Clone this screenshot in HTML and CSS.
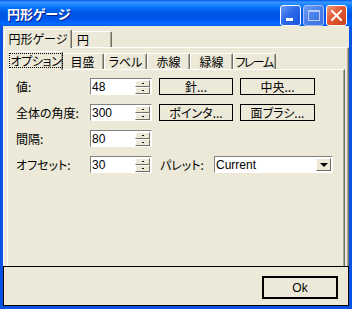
FILE: index.html
```html
<!DOCTYPE html>
<html lang="ja">
<head>
    <meta charset="UTF-8">
    <meta name="viewport" content="width=device-width, initial-scale=1.0">
    <title>円形ゲージ</title>
    <link rel="stylesheet" href="styles.css">
</head>
<body>
    <div class="window">
        <div class="titlebar">
            <span class="title">円形ゲージ</span>
            <div class="title-buttons">
                <div class="tbtn min"><span class="min-bar"></span></div>
                <div class="tbtn max"><span class="max-box"></span></div>
                <div class="tbtn close">
                    <svg width="11" height="11" viewBox="0 0 11 11">
                        <path d="M1 1 L10 10 M10 1 L1 10" stroke="#fff" stroke-width="2" stroke-linecap="square"/>
                    </svg>
                </div>
            </div>
        </div>

        <div class="frame">
            <div class="tabs outer-tabs">
                <div class="tab active outer-first">円形ゲージ</div>
                <div class="tab outer-second">円</div>
            </div>

            <div class="panel outer-panel">
                <div class="tabs inner-tabs">
                    <div class="tab active inner-first"><span class="focus">オプション</span></div>
                    <div class="tab">目盛</div>
                    <div class="tab">ラベル</div>
                    <div class="tab">赤線</div>
                    <div class="tab">緑線</div>
                    <div class="tab narrow-text">フレーム</div>
                </div>

                <div class="panel inner-panel">
                    <div class="options">
                        <span class="field-label">値:</span>
                        <div class="spin"><span class="spin-value">48</span><span class="spin-btns"><i></i><i></i></span></div>
                        <button class="btn">針...</button>
                        <button class="btn">中央...</button>

                        <span class="field-label">全体の角度:</span>
                        <div class="spin"><span class="spin-value">300</span><span class="spin-btns"><i></i><i></i></span></div>
                        <button class="btn">ポインタ...</button>
                        <button class="btn">面ブラシ...</button>

                        <span class="field-label">間隔:</span>
                        <div class="spin"><span class="spin-value">80</span><span class="spin-btns"><i></i><i></i></span></div>
                        <span></span>
                        <span></span>

                        <span class="field-label">オフセット:</span>
                        <div class="spin"><span class="spin-value">30</span><span class="spin-btns"><i></i><i></i></span></div>
                        <div class="palette">
                            <span class="palette-label">パレット:</span>
                            <div class="combo">
                                <span class="combo-value">Current</span>
                                <span class="combo-btn"><i></i></span>
                            </div>
                        </div>
                    </div>
                </div>
            </div>

            <div class="footer">
                <button class="ok-btn">Ok</button>
            </div>
        </div>
    </div>
</body>
</html>
```

FILE: styles.css
```css
/* Base */
* {
    box-sizing: border-box;
}

body {
    margin: 0;
    background: #ece9d8;
    font-family: "Noto Sans CJK JP", sans-serif;
    font-size: 12px;
    font-feature-settings: "palt";
    color: #000;
}

.window {
    width: 352px;
    height: 309px;
    display: flex;
    flex-direction: column;
}

/* Title bar */
.titlebar {
    height: 26px;
    flex: none;
    display: flex;
    align-items: flex-start;
    padding: 0 5px 0 7px;
    background: linear-gradient(to bottom, #0058ee 0%, #3a93ff 8%, #288eff 14%, #127dff 22%, #036ffc 30%, #0262ee 40%, #0057e5 50%, #0054e3 60%, #0055eb 70%, #005bf5 80%, #026afe 90%, #0062ef 100%);
}

.title {
    margin-top: 5px;
    line-height: 17px;
    color: #fff;
    font-size: 13px;
    font-weight: bold;
    text-shadow: 1px 1px #0a1e8c;
}

.title-buttons {
    margin-left: auto;
    margin-top: 5px;
    display: flex;
    gap: 2px;
}

.tbtn {
    width: 21px;
    height: 21px;
    border: 1px solid #fff;
    border-radius: 3px;
    display: flex;
    align-items: center;
    justify-content: center;
    position: relative;
    background: linear-gradient(135deg, #6a9cf8 0%, #2c6ae8 45%, #1a55de 100%);
}

.min-bar {
    position: absolute;
    left: 5px;
    bottom: 4px;
    width: 7px;
    height: 3px;
    background: #fff;
}

.tbtn.max {
    border-color: #a8c0f4;
    background: linear-gradient(135deg, #6f9ef4 0%, #4a80ea 50%, #3b70e2 100%);
}

.max-box {
    width: 12px;
    height: 11px;
    border: 1px solid #b6cbf6;
    border-top-width: 2px;
}

.tbtn.close {
    background: linear-gradient(135deg, #f0997a 0%, #e25a30 45%, #c8411a 100%);
}

/* Frame */
.frame {
    flex: 1;
    display: flex;
    flex-direction: column;
    border: 3px solid #0a52e4;
    border-top: none;
    background: #ece9d8;
}

/* Tabs */
.tabs {
    display: flex;
    align-items: flex-end;
    height: 18px;
    flex: none;
    position: relative;
    z-index: 1;
}

.outer-tabs {
    margin-top: 3px;
    padding-left: 3px;
}

.inner-tabs {
    margin-top: 3px;
    padding-left: 7px;
}

.tab {
    width: 43px;
    height: 16px;
    border: 1px solid;
    border-color: #fff #716f64 transparent #fff;
    border-bottom: none;
    border-radius: 2px 2px 0 0;
    box-shadow: inset -1px 0 #aca899;
    background: #ece9d8;
    display: flex;
    align-items: center;
    justify-content: center;
    white-space: nowrap;
    line-height: 1;
}

.tab.active {
    height: 19px;
    margin: 0 -2px -1px;
    position: relative;
    z-index: 1;
}

.narrow-text {
    letter-spacing: -1.5px;
    padding-right: 1px;
}

.outer-first {
    width: 68px;
}

.outer-second {
    width: 42px;
    justify-content: flex-start;
    padding-left: 6px;
}

.inner-first {
    width: 54px;
    padding: 1px 1px 2px 1px;
}

.focus {
    flex: 1;
    align-self: stretch;
    display: flex;
    align-items: center;
    justify-content: center;
    border: 1px dotted #000;
    letter-spacing: -0.3px;
}

/* Panels */
.panel {
    flex: 1;
    display: flex;
    flex-direction: column;
    border: 1px solid;
    border-color: #fff #716f64 transparent #fff;
    border-bottom: none;
    box-shadow: inset -1px 0 #aca899;
}

.inner-panel {
    margin: 0 3px;
}

/* Option form */
.options {
    display: grid;
    grid-template-columns: 67px 62px 74px 75px;
    grid-template-rows: repeat(4, 17px);
    column-gap: 7px;
    row-gap: 9px;
    padding: 8px 0 0 8px;
    align-items: center;
}

.field-label {
    white-space: nowrap;
    line-height: 1;
}

.spin,
.combo {
    height: 17px;
    display: flex;
    align-items: center;
    background: #fff;
    border: 1px solid;
    border-color: #808080 #fff #fff #808080;
    font-family: "Liberation Sans", sans-serif;
    font-size: 12px;
}

.spin-value,
.combo-value {
    padding-left: 1px;
}

.spin-btns {
    margin-left: auto;
    margin-right: 1px;
    width: 15px;
    height: 14px;
    display: flex;
    flex-direction: column;
}

.spin-btns i {
    flex: 1;
    background: #ece9d8;
    border: 1px solid;
    border-color: #fff #716f64 #716f64 #fff;
    display: flex;
    align-items: center;
    justify-content: center;
}

.spin-btns i::after {
    content: "";
    width: 2px;
    height: 1px;
    background: #000;
}

.btn {
    height: 17px;
    padding: 0;
    border: 1px solid #000;
    background: #ece9d8;
    font: inherit;
    line-height: 1;
    color: #000;
}

.palette {
    grid-column: 3 / span 2;
    width: 174px;
    display: flex;
    align-items: center;
}

.palette-label {
    width: 55px;
    padding-left: 1px;
    line-height: 1;
}

.combo {
    flex: 1;
}

.combo-btn {
    margin-left: auto;
    margin-right: 1px;
    width: 15px;
    height: 13px;
    background: #ece9d8;
    border: 1px solid;
    border-color: #fff #716f64 #716f64 #fff;
    display: flex;
    align-items: center;
    justify-content: center;
}

.combo-btn i {
    width: 0;
    height: 0;
    border-left: 4px solid transparent;
    border-right: 4px solid transparent;
    border-top: 4px solid #000;
}

/* Footer */
.footer {
    height: 40px;
    flex: none;
    border: 1px solid #000;
    display: flex;
    justify-content: flex-end;
    align-items: flex-start;
    padding: 9px 10px 0 0;
}

.ok-btn {
    width: 76px;
    height: 23px;
    border: 2px solid #000;
    background: #ece9d8;
    font-family: "Liberation Sans", sans-serif;
    font-size: 12px;
    color: #000;
    padding: 0;
}
```
